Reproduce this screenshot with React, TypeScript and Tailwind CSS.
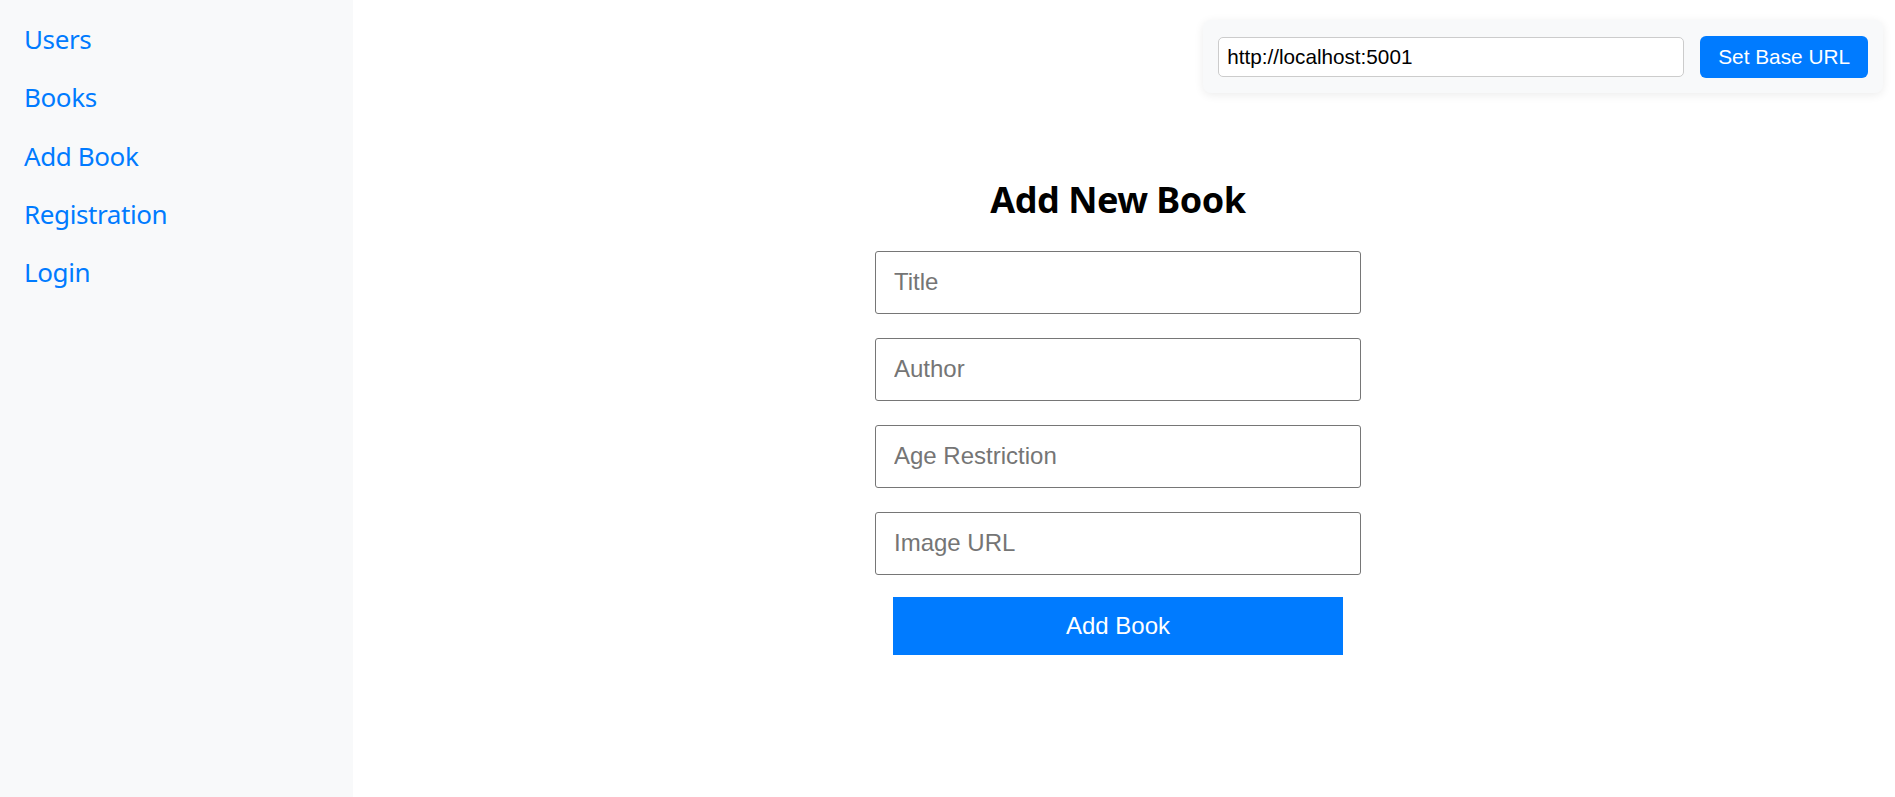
import { useState } from 'react';

const links = ['Users', 'Books', 'Add Book', 'Registration', 'Login'];

export default function App() {
  const [baseUrl, setBaseUrl] = useState('http://localhost:5001');
  const [title, setTitle] = useState('');
  const [author, setAuthor] = useState('');
  const [age, setAge] = useState('');
  const [image, setImage] = useState('');

  const inputClass =
    'w-full h-[63px] px-[18px] border border-[#767676] rounded-[3px] text-[24px] text-black placeholder:text-[#757575] outline-none bg-white';

  return (
    <div className="flex min-h-[797px] w-full bg-white font-['Liberation_Sans',Arial,sans-serif]">
      {/* Sidebar */}
      <nav className="w-[353px] shrink-0 bg-[#f8f9fa] pl-[24px] pt-[10px] flex flex-col font-['Noto_Sans','Open_Sans',sans-serif]">
        {links.map((link) => (
          <a
            key={link}
            href="#"
            className="block h-[58.3px] leading-[58.3px] text-[26px] tracking-[-0.4px] text-[#007bff] no-underline"
          >
            {link}
          </a>
        ))}
      </nav>

      {/* Main */}
      <main className="flex-1 flex flex-col pt-[20px] pr-[12px]">
        <div className="flex justify-end">
          <div className="flex items-center gap-[16px] bg-[#f8f9fa] rounded-[8px] pl-[15px] pr-[15px] h-[73px] shadow-[0_2px_10px_rgba(0,0,0,0.08)]">
            <input
              value={baseUrl}
              onChange={(e) => setBaseUrl(e.target.value)}
              className="w-[466px] h-[40px] px-[8px] border border-[#cccccc] rounded-[5px] bg-white text-[20.7px] text-black outline-none"
            />
            <button className="h-[42px] px-[18px] rounded-[6px] bg-[#007bff] text-white text-[20.8px]">
              Set Base URL
            </button>
          </div>
        </div>

        <div className="flex flex-col items-center mt-[84px]">
          <h2 className="text-[36px] leading-[45.6px] font-bold tracking-[-0.5px] text-black font-['Noto_Sans','Open_Sans',sans-serif]">
            Add New Book
          </h2>
          <form
            className="w-[486px] flex flex-col gap-[24px] mt-[28px]"
            onSubmit={(e) => e.preventDefault()}
          >
            <input
              placeholder="Title"
              value={title}
              onChange={(e) => setTitle(e.target.value)}
              className={inputClass}
            />
            <input
              placeholder="Author"
              value={author}
              onChange={(e) => setAuthor(e.target.value)}
              className={inputClass}
            />
            <input
              placeholder="Age Restriction"
              value={age}
              onChange={(e) => setAge(e.target.value)}
              className={inputClass}
            />
            <input
              placeholder="Image URL"
              value={image}
              onChange={(e) => setImage(e.target.value)}
              className={inputClass}
            />
            <button
              type="submit"
              className="self-center w-[450px] h-[58px] -mt-[2px] bg-[#007bff] text-white text-[24px]"
            >
              Add Book
            </button>
          </form>
        </div>
      </main>
    </div>
  );
}
